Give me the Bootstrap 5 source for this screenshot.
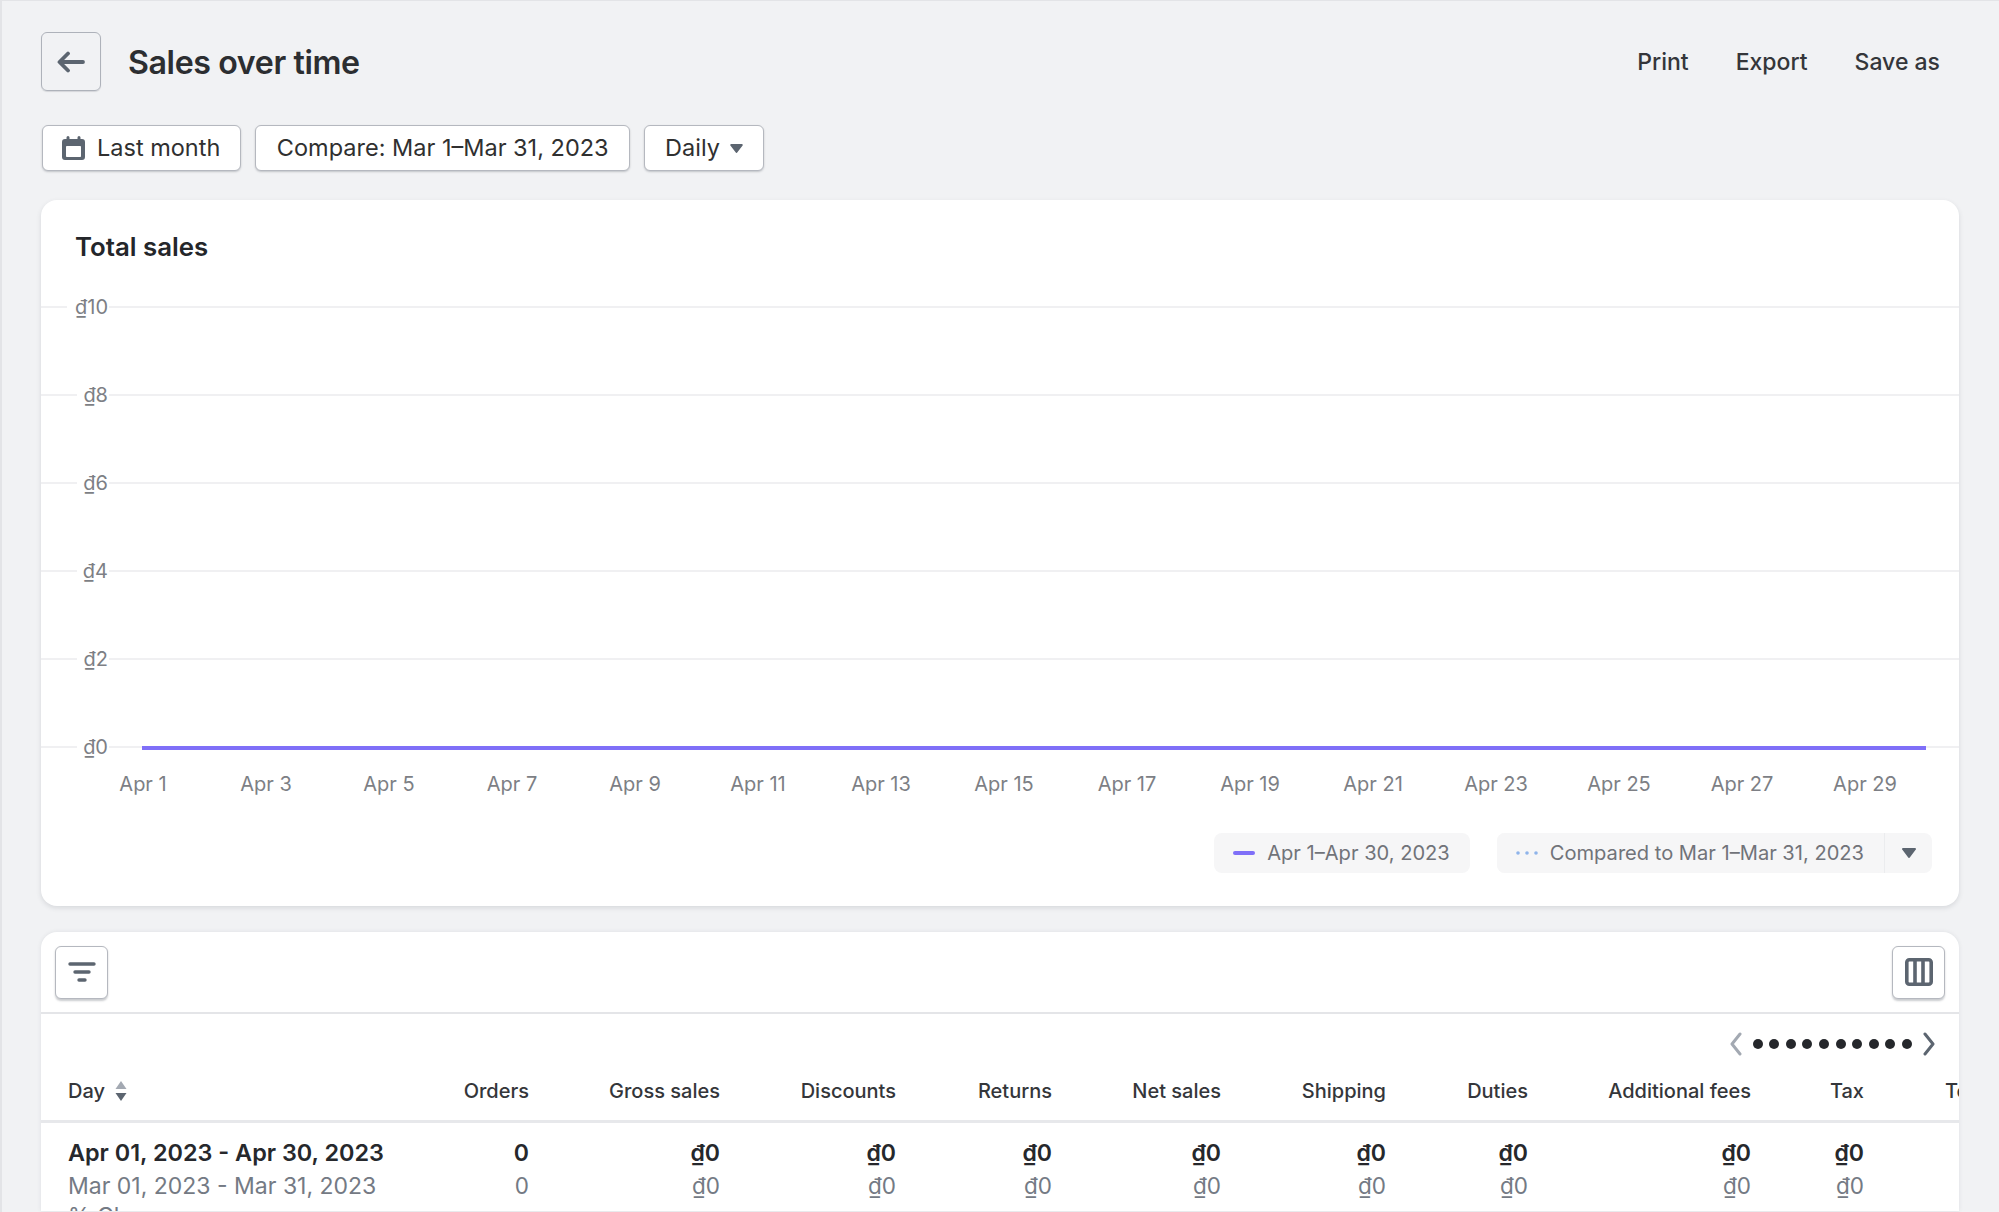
<!DOCTYPE html>
<html lang="en">
<head>
<meta charset="utf-8">
<title>Sales over time</title>
<link href="https://cdn.jsdelivr.net/npm/bootstrap@5.3.0/dist/css/bootstrap.min.css" rel="stylesheet">
<style>
html,body{height:1212px;overflow:hidden}
body{background:#f1f2f4;color:#303030;font-family:Inter,"Liberation Sans",sans-serif;font-size:23px;border-left:2px solid #e3e4e7;border-top:1px solid #e3e4e7}
.page-wrap{padding:31px 40px 0 39px}
.head-row{height:59px;margin-bottom:34px}
.back-btn{width:60px;height:59px;border:1.5px solid #aeb2ba;border-radius:6px;background:transparent;padding:0;box-shadow:0 1px 1px rgba(100,105,115,.2)}
.page-title{font-size:32.2px;font-weight:600;margin:3px 0 0 27px;color:#2c2e31;letter-spacing:-.4px}
.top-link{font-size:23px;font-weight:500;color:#34363a;text-decoration:none}
.top-links{gap:47px;padding:2px 19px 0 0}
.filter-row{gap:14px;height:46px;margin-bottom:29px;padding-left:1px}
.flt-btn{height:46px;background:#fff;border:1.5px solid #b5b8bf;border-radius:6px;padding:0 20.5px;font-size:23.5px;color:#303030;box-shadow:0 1px 2px rgba(80,85,95,.3);white-space:nowrap}
.flt-cal{padding:0 20px 0 19px;gap:12px}
.flt-daily{padding:0 20px;gap:10px}
.white-panel{background:#fff;border:0;border-radius:16px;box-shadow:0 2px 5px rgba(60,65,75,.14)}
.chart-panel{height:706px;margin-bottom:26px;padding-top:28px}
.chart-title{font-size:25.8px;font-weight:600;color:#24262a;margin:0 0 0 34px;line-height:38px}
.chart-svg{display:block;margin-top:-1px;width:100%;height:560px}
.chart-svg text{font-family:Inter,"Liberation Sans",sans-serif;font-size:20px;fill:#7d7f85}
.legend-row{gap:27px;padding-right:27px;margin-top:8px}
.legend-chip{height:40px;background:#f6f6f7;border-radius:8px;padding:0 20px 0 19px;font-size:20.1px;color:#717379;gap:12px;white-space:nowrap}
.legend-arrow{width:48px;border-left:1.5px solid #ebecee;height:40px}
.legend-joined{padding:0;background:#f6f6f7;border-radius:8px}
.table-panel{height:279px;overflow:hidden;border-radius:16px 16px 0 0;box-shadow:0 0 4px rgba(60,65,75,.1)}
.tool-row{height:82px;border-bottom:2px solid #e4e5e8;padding:0 14px;flex:none}
.tool-btn{width:53px;height:53px;background:#fff;border:1.5px solid #b5b8bf;border-radius:6px;padding:0;box-shadow:0 1.5px 2px rgba(80,85,95,.3)}
.pager-row{height:63px;padding:0 23px 3px 0;gap:10px;flex:none}
.page-dot{width:10px;height:10px;border-radius:50%;background:#25272b}
.dots-box{gap:6.6px}
.data-scroll{overflow:hidden}
.sales-table{table-layout:fixed;width:2023px;margin:0;color:#303030;border-collapse:separate;border-spacing:0;--bs-table-bg:transparent}
.sales-table th,.sales-table td{padding:0;border:0;text-align:right;white-space:nowrap;line-height:30px}
.sales-table th{font-size:20px;font-weight:500;height:46px;line-height:28px;border-bottom:3px solid #e7e8eb;vertical-align:top;color:#34363a}
.sales-table th:first-child,.sales-table td:first-child{text-align:left;padding-left:27px}
.sales-table th:last-child{text-align:left;padding-left:81px}
.w-day{width:400px}.w-ord{width:88px}.w-gross{width:191px}.w-disc{width:176px}.w-ret{width:156px}.w-net{width:169px}.w-ship{width:165px}.w-dut{width:142px}.w-add{width:223px}.w-tax{width:113px}.w-tot{width:200px}
.row-main td{font-size:23.4px;font-weight:600;color:#26282c;height:45px;vertical-align:bottom}
.row-main td:not(:first-child){font-size:23px}
.row-comp td{font-size:23px;color:#747a84;height:33px;vertical-align:bottom}
.row-comp td:not(:first-child){font-size:22.5px}
.row-change td{font-size:23px;color:#747a84;height:30px;vertical-align:bottom}
.sort-ico{margin-left:10px;vertical-align:-3px}
</style>
</head>
<body>
<div class="page-wrap">
  <div class="d-flex align-items-center justify-content-between head-row">
    <div class="d-flex align-items-center">
      <button class="btn back-btn d-flex align-items-center justify-content-center" aria-label="Back">
        <svg width="30" height="22" viewBox="0 0 30 22" fill="none" stroke="#5c6570" stroke-width="3.800" stroke-linecap="round" stroke-linejoin="round"><path d="M27 11H4M12 2.500 3.500 11l8.500 8.500"/></svg>
      </button>
      <h1 class="page-title">Sales over time</h1>
    </div>
    <div class="d-flex align-items-center top-links">
      <a class="top-link" href="#">Print</a>
      <a class="top-link" href="#">Export</a>
      <a class="top-link" href="#">Save as</a>
    </div>
  </div>

  <div class="d-flex filter-row">
    <button class="btn flt-btn flt-cal d-flex align-items-center">
      <svg width="23" height="24" viewBox="0 0 23 24"><path fill="#5c6570" d="M6 0a1.500 1.500 0 0 1 1.500 1.500V3h8V1.500a1.500 1.500 0 0 1 3 0V3H20a3 3 0 0 1 3 3v15a3 3 0 0 1-3 3H3a3 3 0 0 1-3-3V6a3 3 0 0 1 3-3h1.500V1.500A1.500 1.500 0 0 1 6 0z"/><rect x="4" y="10" width="15" height="11" rx=".8" fill="#fff"/></svg>
      Last month
    </button>
    <button class="btn flt-btn">Compare: Mar 1–Mar 31, 2023</button>
    <button class="btn flt-btn flt-daily d-flex align-items-center">Daily
      <svg width="13" height="9" viewBox="0 0 14 10"><path fill="#5c6570" d="M1 0h12a1 1 0 0 1 .8 1.600L7.800 9.500a1 1 0 0 1-1.600 0L.2 1.600A1 1 0 0 1 1 0z"/></svg>
    </button>
  </div>

  <div class="card white-panel chart-panel">
    <div class="chart-title">Total sales</div>
    <svg class="chart-svg" viewBox="0 0 1918 560" role="img" aria-label="Total sales chart">
      <g stroke="#f0f0f2" stroke-width="2">
        <path d="M0 42H1918M0 130H1918M0 218H1918M0 306H1918M0 394H1918M0 482H1918"/>
      </g>
      <g fill="#fff">
        <rect x="26" y="28" width="42" height="28"/><rect x="36" y="116" width="32" height="28"/><rect x="36" y="204" width="32" height="28"/><rect x="36" y="292" width="32" height="28"/><rect x="36" y="380" width="32" height="28"/><rect x="36" y="468" width="32" height="28"/>
      </g>
      <g text-anchor="end">
        <text x="67" y="49">₫10</text><text x="67" y="137">₫8</text><text x="67" y="225">₫6</text><text x="67" y="313">₫4</text><text x="67" y="401">₫2</text><text x="67" y="489">₫0</text>
      </g>
      <path d="M101 483H1885" stroke="#7f6ff8" stroke-width="3.800"/>
      <g text-anchor="middle">
        <text x="102" y="526">Apr 1</text><text x="225" y="526">Apr 3</text><text x="348" y="526">Apr 5</text><text x="471" y="526">Apr 7</text><text x="594" y="526">Apr 9</text><text x="717" y="526">Apr 11</text><text x="840" y="526">Apr 13</text><text x="963" y="526">Apr 15</text><text x="1086" y="526">Apr 17</text><text x="1209" y="526">Apr 19</text><text x="1332" y="526">Apr 21</text><text x="1455" y="526">Apr 23</text><text x="1578" y="526">Apr 25</text><text x="1701" y="526">Apr 27</text><text x="1824" y="526">Apr 29</text>
      </g>
    </svg>
    <div class="d-flex justify-content-end legend-row">
      <div class="d-flex align-items-center legend-chip">
        <svg width="22" height="4" viewBox="0 0 22 4"><rect width="22" height="4" rx="2" fill="#7f6ff8"/></svg>
        Apr 1–Apr 30, 2023
      </div>
      <div class="d-flex align-items-center legend-joined">
        <div class="d-flex align-items-center legend-chip">
          <svg width="22" height="4" viewBox="0 0 22 4" fill="#8fb4ea"><circle cx="2" cy="2" r="1.800"/><circle cx="11" cy="2" r="1.800"/><circle cx="20" cy="2" r="1.800"/></svg>
          Compared to Mar 1–Mar 31, 2023
        </div>
        <div class="d-flex align-items-center justify-content-center legend-arrow">
          <svg width="14" height="10" viewBox="0 0 14 10"><path fill="#5c6570" d="M1 0h12a1 1 0 0 1 .8 1.600L7.800 9.500a1 1 0 0 1-1.600 0L.2 1.600A1 1 0 0 1 1 0z"/></svg>
        </div>
      </div>
    </div>
  </div>

  <div class="card white-panel table-panel">
    <div class="d-flex align-items-center justify-content-between tool-row">
      <button class="btn tool-btn d-flex align-items-center justify-content-center" aria-label="Filter">
        <svg width="28" height="22" viewBox="0 0 28 22" fill="none" stroke="#5c6570" stroke-width="3.400" stroke-linecap="round"><path d="M2 3h24M7 11h14M11 19h6"/></svg>
      </button>
      <button class="btn tool-btn d-flex align-items-center justify-content-center" aria-label="Columns">
        <svg width="28" height="28" viewBox="0 0 28 28" fill="none" stroke="#5c6570" stroke-width="3.600"><rect x="1.800" y="1.800" width="24.400" height="24.400" rx="2.500"/><path d="M10 2v24M18 2v24"/></svg>
      </button>
    </div>
    <div class="d-flex align-items-center justify-content-end pager-row">
      <svg width="14" height="24" viewBox="0 0 14 24" fill="none" stroke="#a3a9b2" stroke-width="3" stroke-linecap="round" stroke-linejoin="round"><path d="M11 2 3 12l8 10"/></svg>
      <div class="d-flex align-items-center dots-box">
        <span class="page-dot"></span><span class="page-dot"></span><span class="page-dot"></span><span class="page-dot"></span><span class="page-dot"></span><span class="page-dot"></span><span class="page-dot"></span><span class="page-dot"></span><span class="page-dot"></span><span class="page-dot"></span>
      </div>
      <svg width="14" height="24" viewBox="0 0 14 24" fill="none" stroke="#5c6570" stroke-width="3" stroke-linecap="round" stroke-linejoin="round"><path d="m3 2 8 10-8 10"/></svg>
    </div>
    <div class="data-scroll">
      <table class="table sales-table">
        <colgroup><col class="w-day"><col class="w-ord"><col class="w-gross"><col class="w-disc"><col class="w-ret"><col class="w-net"><col class="w-ship"><col class="w-dut"><col class="w-add"><col class="w-tax"><col class="w-tot"></colgroup>
        <thead>
          <tr>
            <th>Day<svg class="sort-ico" width="12" height="20" viewBox="0 0 12 20"><path fill="#a3a9b2" d="M6 0l5.500 8H.5z"/><path fill="#5c6570" d="M6 20l5.500-8H.5z"/></svg></th>
            <th>Orders</th><th>Gross sales</th><th>Discounts</th><th>Returns</th><th>Net sales</th><th>Shipping</th><th>Duties</th><th>Additional fees</th><th>Tax</th><th>Total sales</th>
          </tr>
        </thead>
        <tbody>
          <tr class="row-main"><td>Apr 01, 2023 - Apr 30, 2023</td><td>0</td><td>₫0</td><td>₫0</td><td>₫0</td><td>₫0</td><td>₫0</td><td>₫0</td><td>₫0</td><td>₫0</td><td></td></tr>
          <tr class="row-comp"><td>Mar 01, 2023 - Mar 31, 2023</td><td>0</td><td>₫0</td><td>₫0</td><td>₫0</td><td>₫0</td><td>₫0</td><td>₫0</td><td>₫0</td><td>₫0</td><td></td></tr>
          <tr class="row-change"><td>% Change</td><td></td><td></td><td></td><td></td><td></td><td></td><td></td><td></td><td></td><td></td></tr>
        </tbody>
      </table>
    </div>
  </div>
</div>
</body>
</html>
